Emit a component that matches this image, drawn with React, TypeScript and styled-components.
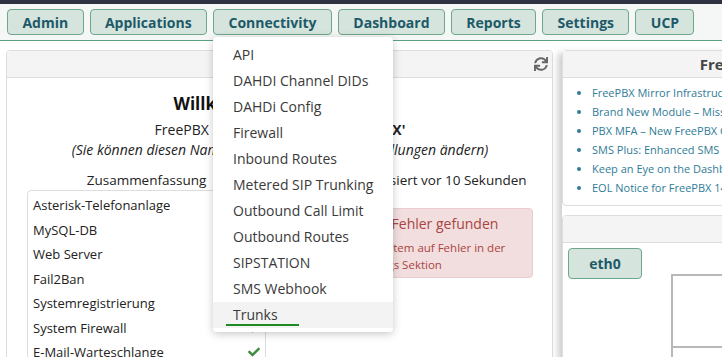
import React from "react";
import styled, { createGlobalStyle } from "styled-components";
import { FaSync, FaCheck } from "react-icons/fa";

const GlobalStyle = createGlobalStyle`
  body {
    margin: 0;
    background: #fff;
    font-family: "Open Sans", "Noto Sans", sans-serif;
    color: #333;
  }
`;

const menu = ["Admin", "Applications", "Connectivity", "Dashboard", "Reports", "Settings", "UCP"];

const connectivity = [
  "API",
  "DAHDI Channel DIDs",
  "DAHDi Config",
  "Firewall",
  "Inbound Routes",
  "Metered SIP Trunking",
  "Outbound Call Limit",
  "Outbound Routes",
  "SIPSTATION",
  "SMS Webhook",
  "Trunks",
];

const summary = [
  "Asterisk-Telefonanlage",
  "MySQL-DB",
  "Web Server",
  "Fail2Ban",
  "Systemregistrierung",
  "System Firewall",
  "E-Mail-Warteschlange",
];

const news = [
  "FreePBX Mirror Infrastructure Update",
  "Brand New Module – Missed Call Notifications",
  "PBX MFA – New FreePBX Commercial Module",
  "SMS Plus: Enhanced SMS for FreePBX",
  "Keep an Eye on the Dashboard",
  "EOL Notice for FreePBX 14",
];

const App = () => {
  return (
    <Page>
      <GlobalStyle />
      <TopBar />
      <Nav>
        {menu.map((m) => (
          <NavButton key={m}>{m}</NavButton>
        ))}
        <Dropdown>
          {connectivity.map((c) => (
            <DropItem key={c} $active={c === "Trunks"}>
              {c}
            </DropItem>
          ))}
        </Dropdown>
      </Nav>
      <Content>
        <Panel>
          <PanelHeader>
            Systemübersicht
            <RefreshIcon>
              <FaSync size={14} />
            </RefreshIcon>
          </PanelHeader>
          <Overview>
            <Welcome>Willkommen bei FreePBX</Welcome>
            <SystemName>
              FreePBX Systemname ist: <b>'HOME-PBX'</b>
            </SystemName>
            <Hint>(Sie können diesen Namen in den Erweiterten Einstellungen ändern)</Hint>
            <Columns>
              <div>
                <ColTitle>Zusammenfassung</ColTitle>
                <SummaryBox>
                  {summary.map((s) => (
                    <SummaryRow key={s}>
                      {s}
                      <Check>
                        <FaCheck size={12} />
                      </Check>
                    </SummaryRow>
                  ))}
                </SummaryBox>
              </div>
              <div>
                <ColTitle $shift>Zuletzt aktualisiert vor 10 Sekunden</ColTitle>
                <Alert>
                  <AlertTitle>Es wurden 12 Fehler gefunden</AlertTitle>
                  <AlertText>
                    Prüfen Sie Ihr System auf Fehler in der Benachrichtigungs Sektion
                  </AlertText>
                </Alert>
              </div>
            </Columns>
          </Overview>
        </Panel>
        <RightCol>
          <Panel>
            <PanelHeader>FreePBX Blog</PanelHeader>
            <NewsList>
              {news.map((n) => (
                <li key={n}>{n}</li>
              ))}
            </NewsList>
          </Panel>
          <Panel>
            <PanelHeader />
            <NetBody>
              <IfaceButton>eth0</IfaceButton>
              <Graph>
                <GraphRow />
              </Graph>
            </NetBody>
          </Panel>
        </RightCol>
      </Content>
    </Page>
  );
};

export default App;

const Page = styled.div`
  width: 722px;
  height: 357px;
  overflow: hidden;
`;

const TopBar = styled.div`
  height: 4px;
  background: #2e3140;
`;

const Nav = styled.div`
  position: relative;
  display: flex;
  gap: 6px;
  padding: 5px 7px 5px;
  background: #f5f7f6;
  border-bottom: 1px solid #5e9f82;
`;

const NavButton = styled.div`
  height: 24px;
  line-height: 25px;
  padding: 0 14.4px;
  background: #d6e4de;
  border: 1px solid #6ea78c;
  border-radius: 4px;
  color: #1d5a68;
  font-size: 14px;
  font-weight: 700;
  white-space: nowrap;
`;

const Dropdown = styled.div`
  position: absolute;
  left: 213px;
  top: 33px;
  width: 180px;
  padding: 5px 0 4px;
  background: #fff;
  border-radius: 4px;
  box-shadow: 0 2px 8px rgba(0, 0, 0, 0.22);
  z-index: 10;
`;

const DropItem = styled.div<{ $active?: boolean }>`
  position: relative;
  height: 26px;
  line-height: 26px;
  padding-left: 20px;
  font-size: 14px;
  color: #3a3a3a;
  background: ${(p) => (p.$active ? "#f3f3f3" : "transparent")};

  &::after {
    content: "";
    display: ${(p) => (p.$active ? "block" : "none")};
    position: absolute;
    left: 13px;
    bottom: 2px;
    width: 73px;
    height: 2px;
    background: #1f8a22;
  }
`;

const Content = styled.div`
  display: grid;
  grid-template-columns: 547px 374px;
  gap: 9px;
  padding: 9px 6px 0;
  align-items: start;
`;

const Panel = styled.div`
  background: #fff;
  border: 1px solid #ddd;
  border-radius: 4px;
  overflow: hidden;
`;

const PanelHeader = styled.div`
  position: relative;
  height: 26px;
  line-height: 26px;
  background: #f4f4f4;
  border-bottom: 1px solid #ddd;
  text-align: center;
  font-size: 15px;
  font-weight: 700;
  color: #444;
`;

const RefreshIcon = styled.span`
  position: absolute;
  right: 4px;
  top: 1px;
  color: #666;
`;

const Overview = styled.div`
  padding: 13px 19px 20px 20px;
  text-align: center;
`;

const Welcome = styled.div`
  font-size: 17px;
  font-weight: 700;
  color: #111;
  line-height: 26px;
`;

const SystemName = styled.div`
  margin-top: 3px;
  font-size: 14px;
  line-height: 20px;
  color: #222;
`;

const Hint = styled.div`
  font-size: 14px;
  font-style: italic;
  line-height: 20px;
  color: #222;
`;

const Columns = styled.div`
  display: grid;
  grid-template-columns: 239px 1fr;
  gap: 21px;
  margin-top: 10px;
`;

const ColTitle = styled.div<{ $shift?: boolean }>`
  font-size: 13.5px;
  line-height: 20px;
  color: #222;
  padding-left: ${(p) => (p.$shift ? "8px" : "0")};
`;

const SummaryBox = styled.div`
  border: 1px solid #ddd;
  border-radius: 4px;
  text-align: left;
  padding-top: 2px;
`;

const SummaryRow = styled.div`
  display: flex;
  justify-content: space-between;
  align-items: center;
  height: 24.5px;
  padding: 0 5px;
  font-size: 13px;
  color: #222;
`;

const Check = styled.span`
  color: #3c8f3c;
  display: flex;
`;

const Alert = styled.div`
  margin-top: 18px;
  padding: 5px 12px 4px;
  background: #f2dede;
  border: 1px solid #ebccd1;
  border-radius: 4px;
  color: #a94442;
  text-align: left;
`;

const AlertTitle = styled.div`
  font-size: 14px;
  line-height: 20px;
  margin-bottom: 5px;
`;

const AlertText = styled.div`
  font-size: 11.5px;
  line-height: 17px;
`;

const RightCol = styled.div`
  display: flex;
  flex-direction: column;
  gap: 9px;
  box-shadow: -7px 0 7px -3px rgba(0, 0, 0, 0.2);
`;

const NewsList = styled.ul`
  margin: 0;
  padding: 5px 0 8px 29px;
  font-size: 11px;
  line-height: 19px;
  color: #2f7c98;
  white-space: nowrap;
`;

const NetBody = styled.div`
  display: flex;
  align-items: flex-start;
  gap: 29px;
  padding: 5px 5px 0;
  height: 120px;
`;

const IfaceButton = styled.div`
  width: 72px;
  height: 29px;
  line-height: 29px;
  text-align: center;
  background: #d6e4de;
  border: 1px solid #6ea78c;
  border-radius: 4px;
  color: #1d5a68;
  font-size: 14px;
  font-weight: 700;
`;

const Graph = styled.div`
  margin-top: 26px;
  width: 240px;
  height: 120px;
  border: 2px solid #b8b8b8;
`;

const GraphRow = styled.div`
  height: 70px;
  border-bottom: 2px solid #b8b8b8;
`;
